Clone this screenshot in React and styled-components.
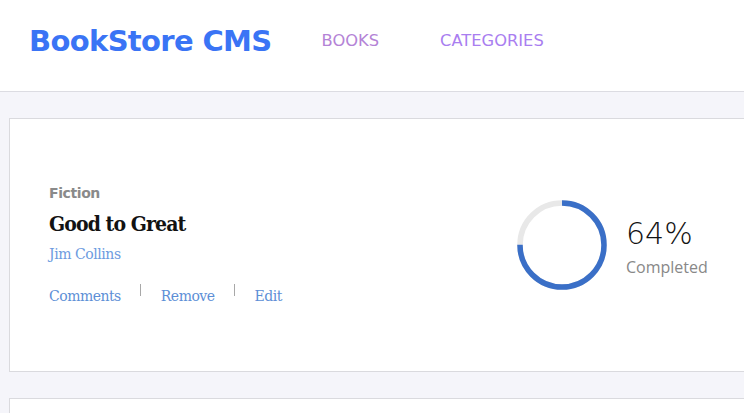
import React from "react";
import styled, { createGlobalStyle } from "styled-components";

const Global = createGlobalStyle`
  html, body { margin: 0; padding: 0; overflow: hidden; background: #f5f5fa; }
  body { font-family: "Open Sans", sans-serif; }
`;

const Page = styled.div`
  width: 1240px;
  min-height: 413px;
  background: #f5f5fa;
`;

const Header = styled.header`
  height: 91px;
  background: #fff;
  border-bottom: 1px solid #dcdce2;
  display: flex;
  align-items: center;
  padding-left: 29px;
  box-sizing: content-box;
`;

const Logo = styled.h1`
  margin: 0;
  font-family: "DejaVu Sans", sans-serif;
  font-weight: bold;
  font-size: 29px;
  letter-spacing: -0.65px;
  color: #3a74f5;
  margin-right: 50px;
  line-height: 1;
  position: relative;
  top: -4px;
`;

const Nav = styled.nav`
  display: flex;
  gap: 61px;
  position: relative;
  top: -5px;
`;

const NavLink = styled.a`
  font-family: "DejaVu Sans", sans-serif;
  font-size: 16.3px;
  font-weight: normal;
  color: ${(p) => p.$color};
  text-decoration: none;
  text-transform: uppercase;
`;

const Main = styled.main`
  padding: 26px 0 0 9px;
  display: flex;
  flex-direction: column;
  gap: 26px;
`;

const Card = styled.section`
  height: 252px;
  background: #fff;
  border: 1px solid #dadade;
  display: flex;
  align-items: center;
  padding-left: 39px;
`;

const Info = styled.div`
  width: 468px;
  display: flex;
  flex-direction: column;
`;

const Genre = styled.span`
  font-family: "DejaVu Sans", sans-serif;
  font-weight: bold;
  font-size: 14px;
  letter-spacing: -0.4px;
  color: #8a8a8a;
  line-height: 16px;
`;

const Title = styled.h2`
  margin: 10px 0 0;
  font-family: "DejaVu Serif Condensed", "DejaVu Serif", serif;
  font-stretch: condensed;
  font-weight: bold;
  font-size: 21px;
  letter-spacing: -0.9px;
  color: #121212;
  line-height: 26px;
`;

const Author = styled.span`
  margin-top: 8px;
  font-family: "DejaVu Serif", serif;
  font-size: 14px;
  letter-spacing: -0.45px;
  color: #6d9be0;
  line-height: 18px;
`;

const Actions = styled.div`
  margin-top: 24px;
  display: flex;
  align-items: center;
`;

const Action = styled.button`
  border: 0;
  background: none;
  padding: 0;
  font-family: "DejaVu Serif", serif;
  font-size: 14px;
  letter-spacing: -0.5px;
  color: #5d8fd6;
  line-height: 18px;
  cursor: pointer;
`;

const Divider = styled.span`
  width: 1px;
  height: 12px;
  background: #a8a8a8;
  margin: 0 20px 0 19px;
  position: relative;
  top: -6px;
`;

const Progress = styled.div`
  display: flex;
  align-items: center;
  gap: 19px;
`;

const Stats = styled.div`
  display: flex;
  flex-direction: column;
  padding-top: 2px;
`;

const Percent = styled.span`
  font-family: "DejaVu Sans", sans-serif;
  font-weight: 200;
  font-size: 30px;
  color: #121212;
  line-height: 36px;
`;

const Status = styled.span`
  margin-top: 5px;
  font-family: "Open Sans", sans-serif;
  font-size: 16px;
  color: #888;
  line-height: 20px;
`;

const Ring = ({ value }) => {
  const r = 42;
  const c = 2 * Math.PI * r;
  return (
    <svg width="90" height="90" viewBox="0 0 90 90">
      <circle cx="45" cy="45" r={r} fill="none" stroke="#e8e8e8" strokeWidth="5.5" />
      <circle
        cx="45"
        cy="45"
        r={r}
        fill="none"
        stroke="#3a6fc7"
        strokeWidth="5.5"
        strokeDasharray={`${c * value} ${c}`}
        transform="rotate(-90 45 45)"
      />
    </svg>
  );
};

export default function App() {
  return (
    <Page>
      <Global />
      <Header>
        <Logo>BookStore CMS</Logo>
        <Nav>
          <NavLink href="#" $color="#b483d6">Books</NavLink>
          <NavLink href="#" $color="#a97ef0">Categories</NavLink>
        </Nav>
      </Header>
      <Main>
        <Card>
          <Info>
            <Genre>Fiction</Genre>
            <Title>Good to Great</Title>
            <Author>Jim Collins</Author>
            <Actions>
              <Action>Comments</Action>
              <Divider />
              <Action>Remove</Action>
              <Divider />
              <Action>Edit</Action>
            </Actions>
          </Info>
          <Progress>
            <Ring value={0.75} />
            <Stats>
              <Percent>64%</Percent>
              <Status>Completed</Status>
            </Stats>
          </Progress>
        </Card>
        <Card />
      </Main>
    </Page>
  );
}
